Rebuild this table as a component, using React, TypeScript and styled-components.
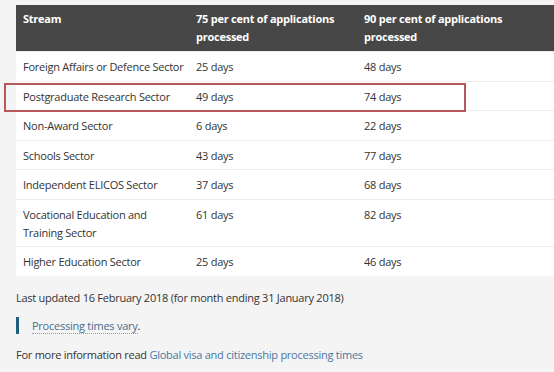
import React from "react";
import styled, { createGlobalStyle } from "styled-components";

const GlobalStyle = createGlobalStyle`
  html, body {
    margin: 0;
    padding: 0;
    background: #f4f4f4;
  }
  body {
    font-family: "Open Sans", "Liberation Sans", sans-serif;
    color: #333;
    overflow: hidden;
  }
`;

const Page = styled.div`
  width: 554px;
  height: 372px;
  padding: 5px 0 0 16px;
  box-sizing: border-box;
  overflow: hidden;
  font-size: 11px;
  letter-spacing: -0.25px;
  line-height: 18px;
`;

const TableWrap = styled.div`
  position: relative;
  width: 560px;
`;

const Table = styled.table`
  width: 100%;
  table-layout: fixed;
  border-collapse: collapse;
  background: #fff;
`;

const Col = styled.col<{ $w?: number }>`
  width: ${(p) => (p.$w ? `${p.$w}px` : "auto")};
`;

const HeadCell = styled.th`
  background: #474747;
  color: #fff;
  font-weight: 700;
  text-align: left;
  vertical-align: top;
  padding: 5px 0 5px 7px;
  height: 36px;
  box-sizing: content-box;
`;

// header labels wrap onto two lines in every column
const HeadLabel = styled.span`
  display: block;
  max-width: 150px;
`;

const Cell = styled.td`
  text-align: left;
  vertical-align: top;
  padding: 6px 0 4.5px 7px;
  border-top: 1px solid #ececec;
`;

const Highlight = styled.div`
  position: absolute;
  left: -12px;
  top: 78px;
  width: 462px;
  height: 29px;
  border: 2px solid #b6585a;
  box-sizing: border-box;
  pointer-events: none;
`;

const Note = styled.p`
  margin: 0;
`;

const Updated = styled(Note)`
  margin-top: 13px;
`;

const Callout = styled.div`
  display: flex;
  align-items: center;
  gap: 13px;
  margin-top: 10px;
`;

const Bar = styled.span`
  width: 3px;
  height: 17px;
  background: #1d5e7a;
`;

const DottedLink = styled.span`
  color: #4a6d8c;
  border-bottom: 1px dotted #8aa0b4;
  line-height: 15px;
`;

const Info = styled(Note)`
  margin-top: 11px;
`;

const Link = styled.span`
  color: #4a74a0;
`;

const rows: [string, string, string][] = [
  ["Foreign Affairs or Defence Sector", "25 days", "48 days"],
  ["Postgraduate Research Sector", "49 days", "74 days"],
  ["Non-Award Sector", "6 days", "22 days"],
  ["Schools Sector", "43 days", "77 days"],
  ["Independent ELICOS Sector", "37 days", "68 days"],
  ["Vocational Education and Training Sector", "61 days", "82 days"],
  ["Higher Education Sector", "25 days", "46 days"],
];

const App: React.FC = () => {
  return (
    <Page>
      <GlobalStyle />
      <TableWrap>
        <Table>
          <colgroup>
            <Col $w={173} />
            <Col $w={168} />
            <Col />
          </colgroup>
          <thead>
            <tr>
              <HeadCell>
                <HeadLabel>Stream</HeadLabel>
              </HeadCell>
              <HeadCell>
                <HeadLabel>75 per cent of applications processed</HeadLabel>
              </HeadCell>
              <HeadCell>
                <HeadLabel>90 per cent of applications processed</HeadLabel>
              </HeadCell>
            </tr>
          </thead>
          <tbody>
            {rows.map(([stream, p75, p90]) => (
              <tr key={stream}>
                <Cell>{stream}</Cell>
                <Cell>{p75}</Cell>
                <Cell>{p90}</Cell>
              </tr>
            ))}
          </tbody>
        </Table>
        <Highlight />
      </TableWrap>
      <Updated>Last updated 16 February 2018 (for month ending 31 January 2018)</Updated>
      <Callout>
        <Bar />
        <span>
          <DottedLink>Processing times vary</DottedLink>.
        </span>
      </Callout>
      <Info>
        For more information read <Link>Global visa and citizenship processing times</Link>
      </Info>
    </Page>
  );
};

export default App;
